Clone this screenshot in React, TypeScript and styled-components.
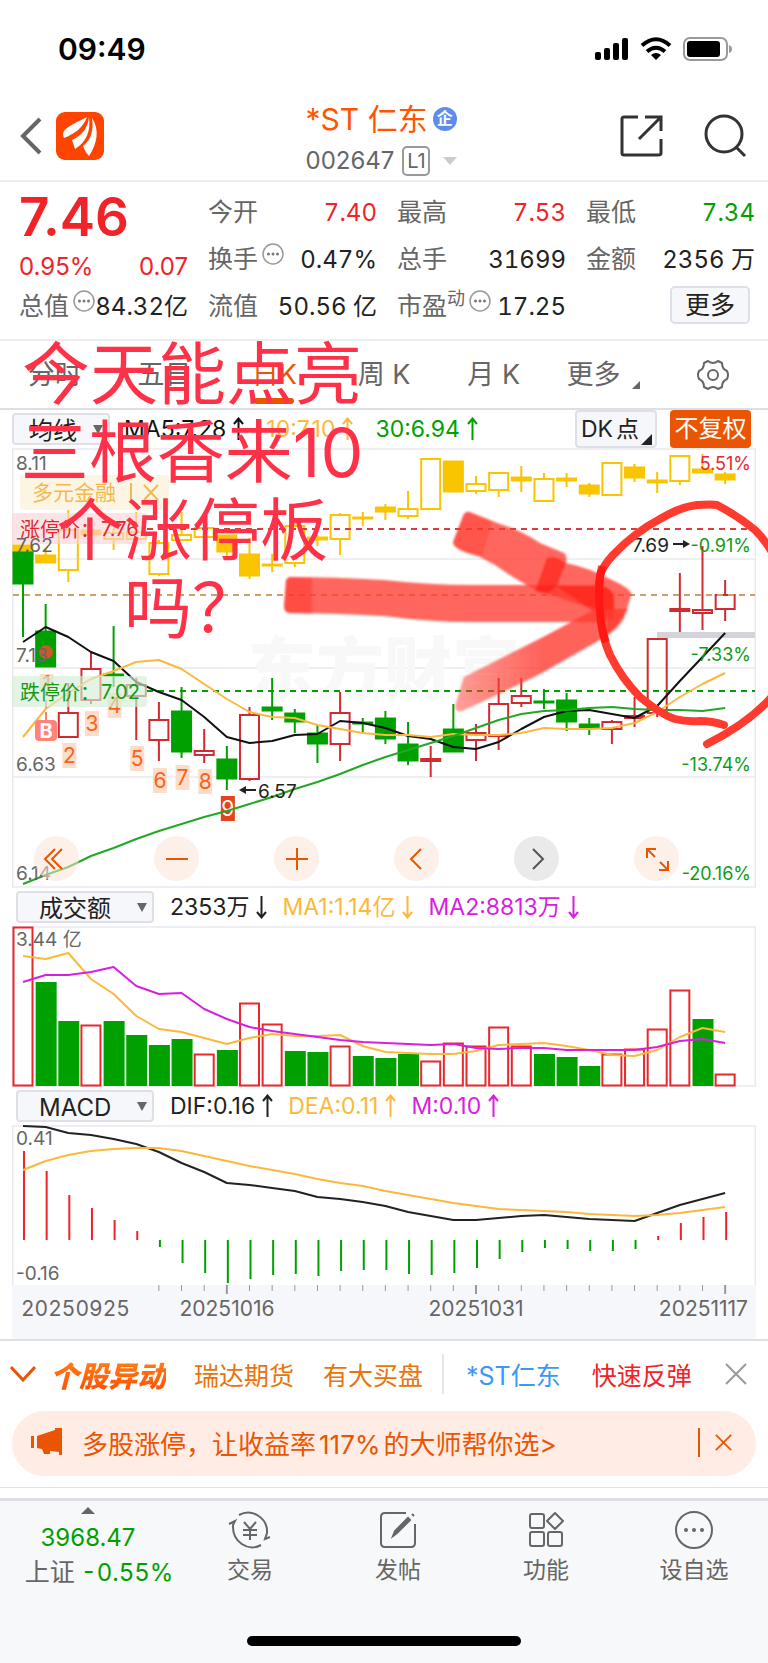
import React from 'react';
import styled, { createGlobalStyle } from 'styled-components';

const ORANGE = '#ea5504';
const RED = '#f02328';
const GREEN = '#00a000';
const AMBER = '#fbb83c';
const PURPLE = '#d81fe0';
const GREY = '#666';
const DARK = '#222';
const LINE = '#e9e9f0';
const SOFT = '#f6f7fa';

const Global = createGlobalStyle`
  * { box-sizing: border-box; }
  body { margin: 0; background: #fff; font-family: Inter, "Noto Sans CJK SC", sans-serif; color: ${DARK}; }
  button, select { font: inherit; color: inherit; border: 0; padding: 0; margin: 0; background: none; cursor: pointer; }
  a { text-decoration: none; color: inherit; }
  svg { display: block; }
  h1, h2, p, dl, dt, dd { margin: 0; font-weight: 400; }
`;

const Page = styled.div`
  position: relative;
  overflow: hidden;
  min-height: 100vh;
  display: flex;
  flex-direction: column;
`;

/* ---------- status bar ---------- */
const StatusBar = styled.div`
  display: flex;
  justify-content: space-between;
  align-items: center;
  height: 96px;
  padding: 2px 35px 0 58px;
`;
const Clock = styled.span`
  font-size: 30px;
  line-height: 36px;
  font-weight: 600;
  color: #000;
`;
const StatusIcons = styled.div`
  display: flex;
  align-items: center;
  gap: 11px;
`;

/* ---------- header ---------- */
const Header = styled.header`
  display: grid;
  grid-template-columns: 1fr auto 1fr;
  align-items: center;
  height: 86px;
  padding: 0 20px;
  border-bottom: 2px solid #ededef;
`;
const HeaderSide = styled.div<{ $end?: boolean }>`
  display: flex;
  align-items: center;
  gap: ${p => (p.$end ? 40 : 14)}px;
  justify-content: ${p => (p.$end ? 'flex-end' : 'flex-start')};
  padding-bottom: 5px;
`;
const IconButton = styled.button`
  display: flex;
  align-items: center;
  justify-content: center;
`;
const TitleBlock = styled.div`
  display: flex;
  flex-direction: column;
  align-items: flex-start;
  gap: 5px;
`;
const TitleLine = styled.div`
  display: flex;
  align-items: center;
  gap: 5px;
  height: 40px;
`;
const Title = styled.h1`
  font-size: 30px;
  line-height: 40px;
  color: #ff5500;
`;
const Verified = styled.span`
  width: 24px;
  height: 24px;
  border-radius: 50%;
  background: #5e8ceb;
  color: #fff;
  font-size: 16px;
  line-height: 23px;
  font-weight: 700;
  text-align: center;
`;
const CodeLine = styled.div`
  display: flex;
  align-items: center;
  gap: 8px;
  font-size: 24px;
  line-height: 34px;
  color: ${GREY};
`;
const Level = styled.span`
  border: 2px solid #999;
  border-radius: 5px;
  width: 28px;
  height: 30px;
  line-height: 26px;
  font-size: 20px;
  text-align: center;
`;

/* ---------- quote ---------- */
const Quote = styled.section`
  display: grid;
  grid-template-columns: repeat(4, 1fr);
  column-gap: 20px;
  padding: 7px 13px 9px 19px;
  border-bottom: 2px solid #ededef;
  font-variant-numeric: tabular-nums;
`;
const QuoteColumn = styled.dl`
  display: flex;
  flex-direction: column;
  min-width: 0;
`;
const Price = styled.p`
  font-size: 53px;
  line-height: 56px;
  font-weight: 600;
  font-variant-numeric: normal;
  color: ${RED};
`;
const Change = styled.p`
  display: flex;
  justify-content: space-between;
  font-size: 24px;
  line-height: 32px;
  padding-top: 6px;
  font-variant-numeric: normal;
  color: ${RED};
`;
const Stat = styled.div`
  display: flex;
  align-items: center;
  height: 47px;
  font-size: 24px;
  line-height: 47px;
  white-space: nowrap;
`;
const StatName = styled.dt`
  font-size: 25px;
  color: ${GREY};
  display: flex;
  align-items: center;
`;
const StatNote = styled.span`
  font-size: 18px;
  line-height: 18px;
  align-self: flex-start;
  padding-top: 7px;
`;
const StatValue = styled.dd<{ $color?: string }>`
  margin-left: auto;
  color: ${p => p.$color || DARK};
`;
const Hint = styled.button`
  width: 22px;
  height: 22px;
  margin-left: 4px;
  align-self: flex-start;
  margin-top: 7px;
`;
const MoreButton = styled.button`
  width: 80px;
  height: 38px;
  margin: 3px 5px 0 auto;
  border: 2px solid #dfe0e7;
  border-radius: 5px;
  background: ${SOFT};
  font-size: 25px;
  line-height: 34px;
`;

/* ---------- period tabs ---------- */
const Tabs = styled.nav`
  display: grid;
  grid-template-columns: repeat(7, 1fr);
  height: 69px;
  border-bottom: 2px solid #dedee6;
`;
const Tab = styled.button<{ $active?: boolean }>`
  position: relative;
  display: flex;
  align-items: center;
  justify-content: center;
  gap: 12px;
  font-size: 27px;
  line-height: 40px;
  color: ${p => (p.$active ? ORANGE : GREY)};
  &::after {
    content: '';
    display: ${p => (p.$active ? 'block' : 'none')};
    position: absolute;
    bottom: 4px;
    width: 40px;
    height: 6px;
    border-radius: 3px;
    background: ${ORANGE};
  }
`;
const Corner = styled.i`
  align-self: flex-end;
  border-left: 8px solid transparent;
  border-bottom: 8px solid currentColor;
  margin-bottom: 19px;
`;

/* ---------- indicator rows ---------- */
const IndicatorRow = styled.div`
  display: flex;
  align-items: center;
  height: 38px;
  padding: 0 17px 0 16px;
  font-size: 23px;
  line-height: 32px;
  white-space: nowrap;
`;
const AverageRow = styled(IndicatorRow)`
  padding: 0 17px 0 12px;
`;
const Picker = styled.label<{ $w: number; $indent: number; $gap: number }>`
  position: relative;
  width: ${p => p.$w}px;
  height: 32px;
  margin-right: ${p => p.$gap}px;
  border: 2px solid #dfe0e7;
  border-radius: 4px;
  background: ${SOFT};
  select {
    appearance: none;
    width: 100%;
    height: 28px;
    line-height: 28px;
    padding-left: ${p => p.$indent}px;
    font-size: 24px;
  }
  &::after {
    content: '';
    position: absolute;
    right: 5px;
    top: 10px;
    border: 5px solid transparent;
    border-top: 9px solid ${GREY};
    border-bottom: 0;
    pointer-events: none;
  }
`;
const Reading = styled.span<{ $color: string; $gap?: number }>`
  display: flex;
  align-items: center;
  gap: 7px;
  margin-right: ${p => p.$gap || 15}px;
  color: ${p => p.$color};
`;
const DkButton = styled.button`
  display: flex;
  align-items: center;
  width: 82px;
  height: 38px;
  margin: 0 13px 0 auto;
  padding-left: 4px;
  border: 2px solid #dfe0e7;
  border-radius: 4px;
  background: ${SOFT};
  color: ${DARK};
  span { margin: 0 2px 0 3px; }
  i { border-left: 11px solid transparent; border-bottom: 11px solid ${DARK}; align-self: flex-end; margin: 0 0 1px 0; }
`;
const RightsButton = styled.button`
  width: 81px;
  height: 38px;
  border-radius: 4px;
  background: ${ORANGE};
  color: #fff;
  font-size: 24px;
`;

/* ---------- charts ---------- */
const ChartArea = styled.section`
  position: relative;
`;
const Panel = styled.div`
  position: relative;
  padding: 0 12px;
  svg.plot { width: 100%; height: auto; }
  .tabular { font-variant-numeric: tabular-nums; }
`;
const Markup = styled.svg`
  position: absolute;
  inset: 0 12px;
  width: calc(100% - 24px);
  height: auto;
  overflow: visible;
  pointer-events: none;
`;
const Controls = styled.div`
  position: absolute;
  left: 34px;
  right: 89px;
  bottom: 7px;
  display: flex;
  justify-content: space-between;
`;
const RoundButton = styled.button<{ $muted?: boolean }>`
  width: 45px;
  height: 45px;
  border-radius: 50%;
  display: flex;
  align-items: center;
  justify-content: center;
  background: ${p => (p.$muted ? 'rgba(222,222,222,.65)' : 'rgba(252,228,214,.55)')};
  color: ${p => (p.$muted ? '#555' : ORANGE)};
`;
const Caption = styled.p`
  position: absolute;
  top: -6px;
  left: 18px;
  width: 348px;
  font-size: 68px;
  line-height: 78px;
  text-align: center;
  color: #ff3148;
  white-space: nowrap;
  pointer-events: none;
`;

/* ---------- alerts ---------- */
const AlertRow = styled.section`
  display: flex;
  align-items: center;
  height: 72px;
  padding: 0 21px 5px 10px;
  border-top: 2px solid #dedee6;
  font-size: 25px;
  white-space: nowrap;
`;
const AlertLogo = styled.h2`
  margin: 0 28px 0 14px;
  font-size: 29px;
  font-weight: 900;
  font-style: italic;
  background: linear-gradient(#ff8a1c, #ff4a00);
  background-clip: text;
  -webkit-background-clip: text;
  color: transparent;
`;
const AlertLink = styled.a<{ $color: string; $gap: number }>`
  color: ${p => p.$color};
  margin-right: ${p => p.$gap}px;
`;
const Divider = styled.span<{ $color: string; $h: number; $gap: number }>`
  width: 2px;
  height: ${p => p.$h}px;
  background: ${p => p.$color};
  margin-right: ${p => p.$gap}px;
`;
const PushRight = styled.div`
  margin-left: auto;
  display: flex;
  align-items: center;
`;
const BannerWrap = styled.div`
  padding: 0 12px 11px;
  border-bottom: 1px solid #e2e2e6;
`;
const Banner = styled.div`
  display: flex;
  align-items: center;
  gap: 19px;
  height: 65px;
  padding: 0 24px 3px 19px;
  border-radius: 33px;
  background: #ffece4;
  color: ${ORANGE};
  font-size: 26px;
  white-space: nowrap;
  b { font-weight: 400; margin: 0 3px; }
`;

/* ---------- bottom bar ---------- */
const BottomBar = styled.nav`
  position: relative;
  flex: 1;
  display: flex;
  align-items: flex-start;
  min-height: 165px;
  margin-top: 10px;
  border-top: 3px solid #dedee6;
  background: #f7f8fa;
`;
const IndexButton = styled.button`
  width: 176px;
  padding: 6px 0 0;
  display: flex;
  flex-direction: column;
  align-items: center;
  font-size: 24px;
  line-height: 35px;
  white-space: nowrap;
  color: ${GREEN};
  svg { margin-bottom: 6px; }
`;
const IndexChange = styled.span`
  padding-left: 22px;
  font-variant-numeric: tabular-nums;
  em { font-style: normal; font-size: 25px; color: ${GREY}; }
`;
const BarItem = styled.a`
  flex: 1;
  display: flex;
  flex-direction: column;
  align-items: center;
  gap: 4px;
  padding-top: 10px;
  font-size: 23px;
  line-height: 34px;
  color: ${GREY};
`;
const HomeIndicator = styled.div`
  position: absolute;
  left: 50%;
  bottom: 17px;
  width: 274px;
  height: 10px;
  margin-left: -137px;
  border-radius: 5px;
  background: #000;
`;

/* ---------- data ---------- */
type Candle = [top: number, bottom: number, high: number, low: number, kind: 'u' | 'd'];
const X0 = 23;
const STEP = 22.65;
const cx = (i: number) => X0 + i * STEP;

const candles: Candle[] = [
  [552, 584, 552, 637, 'd'], [631, 667, 604, 667, 'd'], [713, 737, 683, 737, 'u'], [669, 700, 652, 704, 'u'],
  [674, 676, 626, 687, 'd'], [685, 696, 678, 740, 'u'], [720, 740, 702, 761, 'u'], [711, 752, 687, 758, 'd'],
  [751, 755, 729, 763, 'u'], [759, 779, 746, 790, 'd'], [715, 779, 707, 781, 'u'], [707, 711, 678, 720, 'd'],
  [713, 722, 709, 733, 'd'], [733, 744, 725, 763, 'd'], [713, 744, 692, 761, 'u'], [722, 724, 718, 732, 'd'],
  [718, 739, 711, 744, 'd'], [744, 761, 722, 765, 'd'], [759, 761, 746, 777, 'u'], [729, 752, 704, 752, 'd'],
  [733, 740, 724, 761, 'u'], [704, 736, 678, 750, 'u'], [696, 703, 678, 707, 'u'], [701, 703, 689, 709, 'd'],
  [700, 722, 693, 731, 'd'], [724, 728, 718, 735, 'd'], [722, 729, 720, 744, 'u'], [716, 718, 697, 727, 'u'],
  [639, 713, 639, 717, 'u'], [609, 611, 573, 632, 'u'], [610, 613, 546, 630, 'u'], [595, 609, 580, 621, 'u'],
];
const sector: Candle[] = [
  [545, 557, 545, 557, 'd'], [555, 563, 548, 563, 'd'], [530, 570, 510, 582, 'u'], [530, 535, 530, 535, 'd'],
  [533, 539, 527, 550, 'u'], [532, 539, 512, 539, 'u'], [543, 574, 540, 576, 'u'], [535, 540, 512, 540, 'u'],
  [528, 537, 524, 537, 'u'], [535, 552, 535, 556, 'd'], [554, 576, 538, 579, 'd'], [564, 566, 554, 572, 'd'],
  [526, 563, 522, 567, 'u'], [537, 540, 535, 546, 'd'], [515, 539, 513, 555, 'u'], [517, 519, 512, 526, 'd'],
  [507, 512, 504, 520, 'd'], [509, 516, 491, 519, 'u'], [459, 509, 459, 509, 'u'], [461, 492, 461, 492, 'd'],
  [484, 491, 476, 494, 'u'], [473, 490, 473, 497, 'u'], [477, 481, 466, 492, 'd'], [479, 501, 473, 501, 'u'],
  [478, 481, 473, 487, 'd'], [485, 494, 483, 497, 'd'], [463, 495, 463, 495, 'u'], [467, 478, 464, 482, 'd'],
  [480, 483, 472, 493, 'd'], [456, 481, 456, 485, 'u'], [469, 473, 454, 473, 'd'], [474, 480, 472, 484, 'd'],
];
const ma5 = [642, 627, 637, 652, 661, 682, 692, 700, 717, 737, 743, 741, 735, 734, 721, 723, 728, 736, 739, 747, 749, 742, 729, 717, 711, 710, 714, 718, 706, 681, 657, 633];
const ma10 = [737, 709, 693, 679, 671, 662, 660, 669, 684, 699, 712, 717, 718, 725, 729, 733, 735, 735, 737, 734, 735, 735, 733, 728, 729, 729, 728, 723, 712, 697, 684, 673];
const ma30 = [884, 875, 867, 856, 848, 839, 831, 824, 817, 811, 804, 797, 789, 782, 774, 765, 757, 750, 743, 736, 728, 720, 714, 711, 710, 708, 707, 709, 710, 710, 711, 708];
const volume = [927, 982, 1021, 1025, 1021, 1035, 1045, 1039, 1054, 1050, 1003, 1024, 1051, 1052, 1046, 1056, 1058, 1054, 1061, 1043, 1046, 1027, 1046, 1054, 1057, 1066, 1054, 1049, 1029, 990, 1019, 1074];
const volumeUp = [0, 3, 8, 10, 11, 14, 18, 19, 20, 21, 22, 26, 27, 28, 29, 31];
const vma1 = [956, 959, 953, 979, 994, 1016, 1029, 1032, 1038, 1044, 1038, 1034, 1036, 1036, 1035, 1046, 1052, 1053, 1054, 1054, 1051, 1045, 1044, 1043, 1046, 1050, 1055, 1056, 1050, 1037, 1028, 1032];
const vma2 = [982, 975, 975, 972, 967, 986, 994, 993, 1009, 1019, 1027, 1031, 1034, 1037, 1040, 1042, 1043, 1044, 1045, 1044, 1048, 1049, 1048, 1048, 1050, 1050, 1050, 1050, 1047, 1041, 1039, 1043];
const macd = [1151, 1171, 1195, 1208, 1220, 1231, 1247, 1263, 1273, 1283, 1279, 1275, 1274, 1276, 1271, 1270, 1270, 1274, 1275, 1273, 1268, 1259, 1252, 1248, 1249, 1251, 1251, 1249, 1236, 1223, 1217, 1212];
const dif = [1126, 1127, 1133, 1135, 1139, 1144, 1152, 1163, 1172, 1183, 1185, 1188, 1191, 1197, 1199, 1202, 1206, 1212, 1216, 1220, 1220, 1218, 1216, 1215, 1217, 1219, 1220, 1221, 1213, 1205, 1199, 1193];
const dea = [1170, 1161, 1155, 1151, 1149, 1148, 1148, 1151, 1156, 1161, 1166, 1170, 1174, 1179, 1183, 1186, 1191, 1195, 1199, 1203, 1206, 1209, 1210, 1211, 1212, 1214, 1215, 1216, 1215, 1213, 1210, 1207];
const turns: [index: number, top: number][] = [[1, 674], [2, 743], [3, 711], [4, 693], [5, 746], [6, 768], [7, 765], [8, 769], [9, 796]];

const Trend = ({ ys, color }: { ys: number[]; color: string }) => (
  <polyline fill="none" stroke={color} strokeWidth="2" strokeLinejoin="round" points={ys.map((y, i) => `${cx(i)},${y}`).join(' ')} />
);

const Candles = ({ data, up, down }: { data: Candle[]; up: string; down: string }) => (
  <>
    {data.map(([top, bottom, high, low, kind], i) => {
      const color = kind === 'u' ? up : down;
      const x = cx(i);
      return (
        <g key={i} stroke={color} strokeWidth="2">
          {high < top && <line x1={x} x2={x} y1={high} y2={top} />}
          {low > bottom && <line x1={x} x2={x} y1={bottom} y2={low} />}
          {kind === 'u'
            ? <rect x={x - 9.5} y={top} width="19" height={bottom - top} fill="none" />
            : <rect x={x - 10.5} y={top - 0.5} width="21" height={bottom - top + 1} fill={color} stroke="none" />}
        </g>
      );
    })}
  </>
);

const Arrow = ({ down }: { down?: boolean }) => (
  <svg width="11" height="24" viewBox="0 0 11 24" fill="none" stroke="currentColor" strokeWidth="2">
    <path d={down ? 'M5.500 1V22M1 17L5.500 22.500L10 17' : 'M5.500 23V2M1 7L5.500 1.500L10 7'} />
  </svg>
);

const Dots = () => (
  <svg width="22" height="22" viewBox="0 0 22 22" fill="none" stroke="#999" strokeWidth="1.500">
    <circle cx="11" cy="11" r="10" />
    <g fill="#777" stroke="none"><circle cx="6.500" cy="11" r="1.500" /><circle cx="11" cy="11" r="1.500" /><circle cx="15.500" cy="11" r="1.500" /></g>
  </svg>
);

const MainPlot = () => (
  <svg className="plot" viewBox="12 448 744 440" fontSize="19">
    <g stroke={LINE} strokeWidth="1.500" fill="none">
      <rect x="12.750" y="449" width="742.500" height="438" />
      <path d="M13 559H755M13 668H755M13 777H755" />
    </g>
    <text x="248" y="694" fontSize="68" fontWeight="900" fill="#f8f8f8">东方财富</text>
    <rect x="657" y="632" width="98" height="6" fill="#d3d4da" />
    <Candles data={sector} up="#f9c400" down="#f9c400" />
    <Candles data={candles} up="#cf2b31" down={GREEN} />
    <g strokeWidth="2" strokeDasharray="6 5" fill="none">
      <path d="M147 529H755" stroke="#dc3b40" />
      <path d="M13 595H755" stroke="#cfa063" />
      <path d="M147 691H755" stroke={GREEN} />
    </g>
    <circle cx="46" cy="652" r="7" fill="#c85a2c" />
    <path d="M46 676V722" stroke="#f0554a" strokeWidth="1.500" strokeDasharray="8 4" />
    {turns.map(([i, top]) => (
      <g key={i} fontSize="21" textAnchor="middle">
        <rect x={cx(i) - 6} y={top} width="14" height={i === 1 ? 17 : 25} fill={i === 9 ? '#e5431a' : '#fddcc9'} />
        <text x={cx(i) + 1} y={top + (i === 1 ? 17 : 20)} fill={i === 9 ? '#fff' : '#f7631b'}>{i}</text>
      </g>
    ))}
    <Trend ys={ma5} color="#111" />
    <Trend ys={ma10} color={AMBER} />
    <Trend ys={ma30} color="#22a726" />
    <rect x="35" y="720" width="22" height="21" rx="4" fill="#ff8379" />
    <text x="46" y="738" fontSize="20" fontWeight="700" textAnchor="middle" fill="#fff">B</text>
    <rect x="20" y="475" width="149" height="35" rx="3" fill="#fcf3df" opacity=".85" />
    <text x="32" y="500" fontSize="21" fill="#f3b94e">多元金融</text>
    <path d="M131 483V502M144 485L158 500M158 485L144 500" stroke="#f3b94e" strokeWidth="2" />
    <rect x="12" y="513" width="135" height="31" rx="3" fill="#fbd5d8" opacity=".65" />
    <text x="20" y="537" fontSize="20" fill="#e0282e">涨停价：</text>
    <text x="101" y="536" fontSize="20" fill="#e0282e">7.76</text>
    <rect x="12" y="676" width="135" height="31" rx="3" fill="#d5eed5" opacity=".65" />
    <text x="20" y="700" fontSize="20" fill="#129a16">跌停价：</text>
    <text x="101" y="699" fontSize="20" fill="#129a16">7.02</text>
    <g fill={GREY}>
      <text x="16" y="470">8.11</text><text x="16" y="552">7.62</text><text x="16" y="662">7.13</text>
      <text x="16" y="771">6.63</text><text x="16" y="880">6.14</text>
    </g>
    <g fill="#0e9c16" textAnchor="end" fontSize="18">
      <text x="751" y="470" fill="#e8282e">5.51%</text><text x="751" y="552">-0.91%</text><text x="751" y="661">-7.33%</text>
      <text x="751" y="771">-13.74%</text><text x="751" y="880">-20.16%</text>
    </g>
    <g fill={DARK}>
      <text x="258" y="798">6.57</text><text x="632" y="552">7.69</text>
      <path d="M239 790L246 786V794ZM690 544L683 540V548Z" />
      <path d="M244 790H256M673 544H685" stroke={DARK} strokeWidth="2" />
    </g>
  </svg>
);

const VolumePlot = () => (
  <svg className="plot" viewBox="12 926 744 161">
    <rect x="12.750" y="927" width="742.500" height="159" fill="none" stroke={LINE} strokeWidth="1.500" />
    {volume.map((y, i) => volumeUp.includes(i)
      ? <rect key={i} x={cx(i) - 9.5} y={y + 0.5} width="19" height={1085 - y} fill="#fff" stroke="#e8282c" strokeWidth="2" />
      : <rect key={i} x={cx(i) - 10} y={y} width="21" height={1086 - y} fill={GREEN} />)}
    <Trend ys={vma1} color={AMBER} />
    <Trend ys={vma2} color={PURPLE} />
    <text x="16" y="946" fontSize="19" fill={GREY}>3.44 亿</text>
  </svg>
);

const MacdPlot = () => (
  <svg className="plot" viewBox="12 1125 744 214">
    <rect x="12" y="1285" width="744" height="54" fill={SOFT} />
    <path d="M12.750 1285V1126H755.250V1285" fill="none" stroke={LINE} strokeWidth="1.500" />
    {macd.map((y, i) => (
      <line key={i} x1={cx(i) + 1} x2={cx(i) + 1} y1="1240" y2={y} stroke={y < 1240 ? RED : GREEN} strokeWidth={2} />
    ))}
    <Trend ys={dif} color={DARK} />
    <Trend ys={dea} color={AMBER} />
    {macd.map((_, i) => i > 5 && (
      <line key={i} x1={cx(i)} x2={cx(i)} y1="1285" y2={(i - 9) % 11 ? 1291 : 1294} stroke="#999" strokeWidth={(i - 9) % 11 ? 1 : 2} />
    ))}
    <g fill={GREY} fontSize="19"><text x="16" y="1145">0.41</text><text x="16" y="1280">-0.16</text></g>
    <g fill={GREY} fontSize="21">
      <text className="tabular" x="21" y="1316">20250925</text>
      <text x="227" y="1316" textAnchor="middle">20251016</text>
      <text x="476" y="1316" textAnchor="middle">20251031</text>
      <text x="748" y="1316" textAnchor="end">20251117</text>
    </g>
  </svg>
);

const BrushMarks = () => (
  <Markup viewBox="12 448 744 440" aria-hidden="true">
    <defs>
      <linearGradient id="fade"><stop offset="0" stopColor="#ff3b30" stopOpacity=".6" /><stop offset=".5" stopColor="#ff3b30" /></linearGradient>
      <filter id="soft"><feGaussianBlur stdDeviation="1" /></filter>
    </defs>
    <g filter="url(#soft)">
      <path d="M289 577Q335 577 384 580Q430 585 470 585H600Q614 588 614 600V612Q613 622 600 622H470Q430 622 384 616Q330 613 290 613Q284 613 284 606L286 580Z" fill="#ff3b30" opacity=".78" />
      <path d="M289 577L312 578V614L290 613Q284 613 284 606L286 580Z" fill="#ff2a22" opacity=".4" />
      <path d="M470 512L500 524Q520 530 540 543L564 553Q568 556 566 563Q590 568 612 580Q634 590 631 596L624 618Q618 630 600 640L612 612Q580 606 555 596Q545 594 536 590Q510 576 495 565L478 556Q453 550 453 542L463 516Q465 511 470 512Z" fill="#ff3b30" opacity=".78" />
      <path d="M467 512L492 522L482 556Q453 550 453 542L463 516Z" fill="#ff2a22" opacity=".3" />
      <path d="M547 558Q555 555 566 563L556 587Q548 596 535 591Z" fill="#ff1410" opacity=".6" />
      <path d="M556 586H600Q614 588 614 600V621L590 609Z" fill="#ff1410" opacity=".5" />
      <path d="M464 677L545 636Q575 620 595 609H628Q618 628 600 640L540 674Q500 694 462 711Q455 713 455 706Z" fill="url(#fade)" opacity=".8" />
    </g>
    <path d="M724 725Q712 721 700 721Q686 722 675 719Q662 715 640 697Q622 679 610 655Q601 635 600 610Q597 590 600 575Q603 566 613 555Q635 532 660 519Q680 507 697 505Q712 504 717 505Q738 516 755 530Q785 560 795 620Q795 670 769 700Q745 725 707 744" fill="none" stroke="#ff3b30" strokeWidth="8" strokeLinecap="round" strokeLinejoin="round" />
    <path d="M602 566Q597 590 600 610Q601 630 606 642" fill="none" stroke="#ff0a08" strokeWidth="8" opacity=".7" />
  </Markup>
);

const controls: { label: string; muted?: boolean; d: string }[] = [
  { label: '最早', d: 'M13 5L3 15L13 25M20 5L10 15L20 25' },
  { label: '缩小', d: 'M4 15H26' },
  { label: '放大', d: 'M4 15H26M15 4V26' },
  { label: '向左', d: 'M19 5L9 15L19 25' },
  { label: '向右', muted: true, d: 'M11 5L21 15L11 25' },
  { label: '全屏', d: 'M5 14V5H14M5 5L13 13M26 17V26H17M26 26L18 18' },
];

export default function App() {
  return (
    <Page>
      <Global />
      <StatusBar>
        <Clock>09:49</Clock>
        <StatusIcons>
          <svg width="34" height="24" viewBox="0 0 34 24"><rect x="0" y="15" width="6" height="8" rx="2" /><rect x="9" y="11" width="6" height="12" rx="2" /><rect x="18" y="6" width="6" height="17" rx="2" /><rect x="27" y="1" width="6" height="22" rx="2" /></svg>
          <svg width="32" height="24" viewBox="0 0 32 24" fill="none" stroke="#000" strokeWidth="4"><path d="M2 8.500Q16 -4 30 8.500M7 14.500Q16 7 25 14.500" /><path d="M16 23L11 18Q16 14 21 18Z" fill="#000" stroke="none" /></svg>
          <svg width="50" height="24" viewBox="0 0 50 24"><rect x="1" y="1" width="43" height="22" rx="6" fill="none" stroke="#9a9a9a" strokeWidth="2" /><rect x="4" y="4" width="33" height="16" rx="3" /><path d="M46 8Q49 9 49 12Q49 15 46 16Z" fill="#9a9a9a" /></svg>
        </StatusIcons>
      </StatusBar>

      <Header>
        <HeaderSide>
          <IconButton aria-label="返回"><svg width="22" height="38" viewBox="0 0 22 38" fill="none" stroke="#666" strokeWidth="4"><path d="M20 2L3 19L20 36" /></svg></IconButton>
          <svg width="48" height="48" viewBox="0 0 48 48">
            <rect width="48" height="48" rx="9" fill="#ff4400" />
            <path d="M31 5C24 9 13 13 8 19Q6 22 8 26C18 22 27 16 31 5Z" fill="#fff" />
            <path d="M33 5C32 15 27 23 16 28L19 37C30 30 35 20 33 5Z" fill="#fff" />
            <path d="M36 6C38 18 35 28 27 34Q29 40 33 44C41 32 44 18 36 6Z" fill="#fff" />
          </svg>
        </HeaderSide>
        <TitleBlock>
          <TitleLine><Title>*ST 仁东</Title><Verified>企</Verified></TitleLine>
          <CodeLine>002647<Level>L1</Level><svg width="24" height="8" viewBox="-5 0 24 8"><path d="M0 0H14L7 8Z" fill="#ccc" /></svg></CodeLine>
        </TitleBlock>
        <HeaderSide $end>
          <IconButton aria-label="分享"><svg width="44" height="42" viewBox="0 0 44 42" fill="none" stroke="#333" strokeWidth="3"><path d="M18 2H4Q2 2 2 4V38Q2 40 4 40H38Q41 40 41 38V24M25 2H41V16M41 2L19 24" /></svg></IconButton>
          <IconButton aria-label="搜索"><svg width="44" height="44" viewBox="0 0 44 44" fill="none" stroke="#333" strokeWidth="3"><circle cx="20" cy="20" r="18" /><path d="M32 33L41 42" /></svg></IconButton>
        </HeaderSide>
      </Header>

      <Quote>
        <QuoteColumn as="div">
          <Price>7.46</Price>
          <Change><span>0.95%</span><span>0.07</span></Change>
          <Stat><StatName as="span">总值<Hint aria-label="总值说明"><Dots /></Hint></StatName><StatValue as="span">84.32亿</StatValue></Stat>
        </QuoteColumn>
        <QuoteColumn>
          <Stat><StatName>今开</StatName><StatValue $color={RED}>7.40</StatValue></Stat>
          <Stat><StatName>换手<Hint aria-label="换手说明"><Dots /></Hint></StatName><StatValue>0.47%</StatValue></Stat>
          <Stat><StatName>流值</StatName><StatValue>50.56 亿</StatValue></Stat>
        </QuoteColumn>
        <QuoteColumn>
          <Stat><StatName>最高</StatName><StatValue $color={RED}>7.53</StatValue></Stat>
          <Stat><StatName>总手</StatName><StatValue>31699</StatValue></Stat>
          <Stat><StatName>市盈<StatNote>动</StatNote><Hint aria-label="市盈说明"><Dots /></Hint></StatName><StatValue>17.25</StatValue></Stat>
        </QuoteColumn>
        <QuoteColumn>
          <Stat><StatName>最低</StatName><StatValue $color={GREEN}>7.34</StatValue></Stat>
          <Stat><StatName>金额</StatName><StatValue>2356 万</StatValue></Stat>
          <MoreButton>更多</MoreButton>
        </QuoteColumn>
      </Quote>

      <ChartArea>
        <Tabs>
          <Tab>分时</Tab><Tab>五日</Tab><Tab $active>日K</Tab><Tab>周 K</Tab><Tab>月 K</Tab>
          <Tab>更多<Corner /></Tab>
          <Tab aria-label="设置">
            <svg width="32" height="32" viewBox="0 0 32 32" fill="none" stroke="#666" strokeWidth="2">
              <path d="M11 2Q16 6 21 2L25 4Q25 10 30 12Q31 14 31 16Q31 18 30 20Q25 22 25 28L21 30Q16 26 11 30L7 28Q7 22 2 20Q1 18 1 16Q1 14 2 12Q7 10 7 4Z" strokeLinejoin="round" />
              <circle cx="16" cy="16" r="5" />
            </svg>
          </Tab>
        </Tabs>
        <AverageRow>
          <Picker $w={98} $indent={15} $gap={14}><select aria-label="均线"><option>均线</option></select></Picker>
          <Reading $color="#111" $gap={22}>MA5:7.28<Arrow /></Reading>
          <Reading $color={AMBER} $gap={22}>10:7.10<Arrow /></Reading>
          <Reading $color={GREEN}>30:6.94<Arrow /></Reading>
          <DkButton>DK<span>点</span><i /></DkButton>
          <RightsButton>不复权</RightsButton>
        </AverageRow>
        <Panel>
          <MainPlot />
          <Controls>
            {controls.map(c => (
              <RoundButton key={c.label} $muted={c.muted} aria-label={c.label}>
                <svg width="30" height="30" viewBox="0 0 30 30" fill="none" stroke="currentColor" strokeWidth="2"><path d={c.d} /></svg>
              </RoundButton>
            ))}
          </Controls>
          <BrushMarks />
        </Panel>
        <Caption>今天能点亮<br />三根香来10<br />个涨停板<br />吗？</Caption>
      </ChartArea>

      <IndicatorRow>
        <Picker $w={138} $indent={21} $gap={16}><select aria-label="成交额"><option>成交额</option></select></Picker>
        <Reading $color={DARK}>2353万<Arrow down /></Reading>
        <Reading $color={AMBER}>MA1:1.14亿<Arrow down /></Reading>
        <Reading $color={PURPLE}>MA2:8813万<Arrow down /></Reading>
      </IndicatorRow>
      <Panel><VolumePlot /></Panel>
      <IndicatorRow>
        <Picker $w={138} $indent={21} $gap={16}><select aria-label="指标"><option>MACD</option></select></Picker>
        <Reading $color={DARK}>DIF:0.16<Arrow /></Reading>
        <Reading $color={AMBER}>DEA:0.11<Arrow /></Reading>
        <Reading $color={PURPLE}>M:0.10<Arrow /></Reading>
      </IndicatorRow>
      <Panel><MacdPlot /></Panel>

      <AlertRow>
        <IconButton aria-label="展开"><svg width="26" height="16" viewBox="0 0 26 16" fill="none" stroke={ORANGE} strokeWidth="3"><path d="M1 1L13 14L25 1" /></svg></IconButton>
        <AlertLogo>个股异动</AlertLogo>
        <AlertLink href="#ruida" $color="#e8740c" $gap={29}>瑞达期货</AlertLink>
        <AlertLink href="#buy" $color="#e8740c" $gap={19}>有大买盘</AlertLink>
        <Divider $color="#e6e6ea" $h={40} $gap={22} />
        <AlertLink href="#stock" $color="#3b98f5" $gap={31}>*ST仁东</AlertLink>
        <AlertLink href="#rebound" $color={RED} $gap={10}>快速反弹</AlertLink>
        <PushRight><IconButton aria-label="关闭"><svg width="22" height="22" viewBox="0 0 22 22" stroke="#999" strokeWidth="2"><path d="M1 1L21 21M21 1L1 21" /></svg></IconButton></PushRight>
      </AlertRow>
      <BannerWrap>
        <Banner>
          <svg width="32" height="28" viewBox="0 0 32 28" fill={ORANGE}><path d="M0 8H3V20H0ZM6 8L24 2V0H31V27H28V24L19 23V26H13L11 21L6 20Z" /></svg>
          <a href="#masters">多股涨停，让收益率<b>117%</b>的大师帮你选&gt;</a>
          <PushRight>
            <Divider $color={ORANGE} $h={29} $gap={15} />
            <IconButton aria-label="关闭提示"><svg width="17" height="17" viewBox="0 0 20 20" fill="none" stroke="currentColor" strokeWidth="2"><path d="M1 1L19 19M19 1L1 19" /></svg></IconButton>
          </PushRight>
        </Banner>
      </BannerWrap>

      <BottomBar>
        <IndexButton>
          <svg width="14" height="7" viewBox="0 0 14 7"><path d="M0 7H14L7 0Z" fill="#666" /></svg>
          <span>3968.47</span>
          <IndexChange><em>上证</em> -0.55%</IndexChange>
        </IndexButton>
        <BarItem href="#trade">
          <svg width="44" height="38" viewBox="0 0 44 38" fill="none" stroke="#666" strokeWidth="2"><path d="M11 4C24 -3 40 7 39 22L37 28L42 26M33 34C20 41 4 31 5 14L7 10L1 13M16 11L22 18L28 11M22 18V29M15 19H29M15 24H29" /></svg>
          交易
        </BarItem>
        <BarItem href="#post">
          <svg width="38" height="38" viewBox="0 0 38 38" fill="none" stroke="#666" strokeWidth="2"><path d="M27 2H6Q2 2 2 6V32Q2 36 6 36H32Q36 36 36 32V13" /><path d="M14 25L16 20L29 7L31 9L18 22ZM33 3L35 5" fill="#666" strokeWidth="2" /></svg>
          发帖
        </BarItem>
        <BarItem href="#tools">
          <svg width="38" height="38" viewBox="0 0 38 38" fill="none" stroke="#666" strokeWidth="2"><rect x="3" y="3" width="14" height="14" rx="2" /><rect x="3" y="21" width="14" height="14" rx="2" /><rect x="21" y="21" width="14" height="14" rx="2" /><path d="M28 2L36 10L28 18L20 10Z" strokeLinejoin="round" /></svg>
          功能
        </BarItem>
        <BarItem href="#watchlist">
          <svg width="38" height="38" viewBox="0 0 38 38" fill="none" stroke="#666" strokeWidth="2"><circle cx="19" cy="19" r="18" /><g fill="#666" stroke="none"><circle cx="11" cy="19" r="2" /><circle cx="19" cy="19" r="2" /><circle cx="27" cy="19" r="2" /></g></svg>
          设自选
        </BarItem>
        <HomeIndicator />
      </BottomBar>
    </Page>
  );
}
